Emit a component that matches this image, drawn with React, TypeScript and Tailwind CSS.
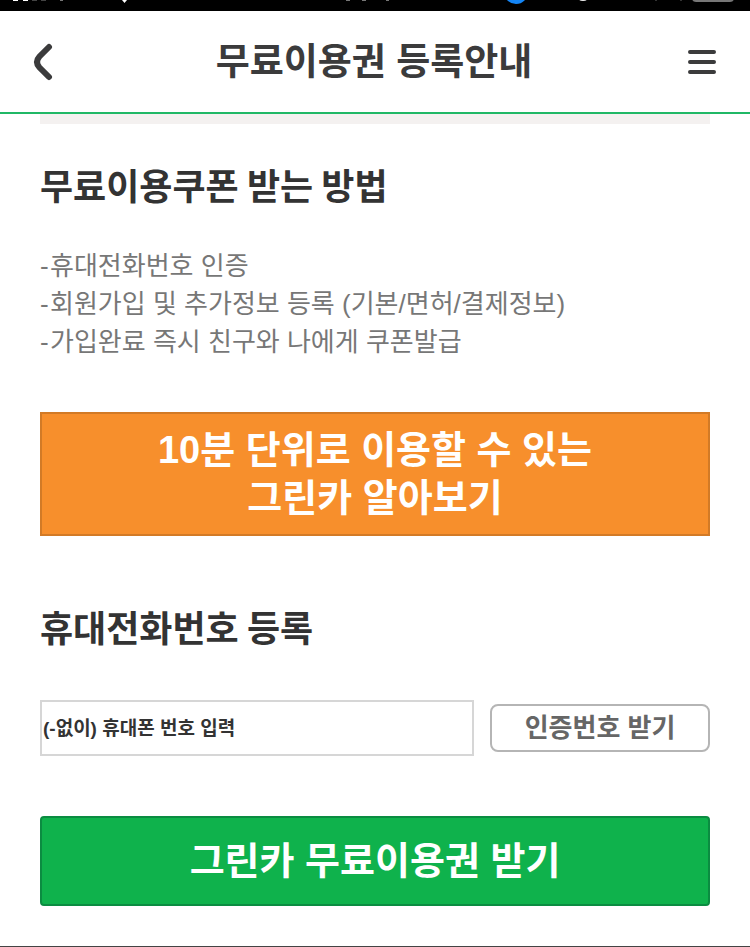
export default function App() {
  return (
    <div className="flex min-h-screen flex-col border-b border-[#444] bg-white font-['Liberation_Sans','Noto_Sans_CJK_KR',sans-serif] text-[#333]">
      <div className="h-[11px] overflow-hidden bg-black">
        <svg viewBox="0 0 750 11" className="block h-[11px] w-full" preserveAspectRatio="none" aria-hidden="true">
          <path d="M13 0h5M23 0h5" stroke="#fff" strokeWidth="2" />
          <path d="M32 0h5M41 0h5" stroke="#444" strokeWidth="2" />
          <path d="M60 0h3M346 0h4M362 0h4M386 0h3" stroke="#777" strokeWidth="2" />
          <path d="M655 0h2M680 0h2" stroke="#333" strokeWidth="2" />
          <path d="M122 0h5l-2.500 3z" fill="#fff" />
          <circle cx="516" cy="-8" r="12" fill="#1485f5" />
          <ellipse cx="583" cy="-1" rx="4" ry="2" fill="#eee" />
          <rect x="692" y="-10" width="42" height="12" rx="4" fill="#777" />
        </svg>
      </div>
      <header className="flex h-[103px] items-center justify-between border-b-2 border-[#20b866] px-8">
        <button aria-label="뒤로" className="h-10 w-7">
          <svg viewBox="0 0 28 40" className="h-10 w-7" fill="none" stroke="#3b3b3c" strokeWidth="6" strokeLinecap="round"><path d="M17 5 L7.500 14.500 Q2.500 20 7.500 25.500 L17 35" /></svg>
        </button>
        <h1 className="pt-[2px] text-[37px] font-bold leading-[54px] text-[#3b3b3c]">무료이용권 등록안내</h1>
        <button aria-label="메뉴" className="mr-[2px] h-10 w-7">
          <svg viewBox="0 0 28 40" className="h-10 w-7" fill="none" stroke="#3b3b3c" strokeWidth="4" strokeLinecap="round"><path d="M2 10H26M2 20H26M2 30H26" /></svg>
        </button>
      </header>
      <main className="px-10">
        <div className="h-[10px] bg-[#f4f1f0]" />
        <h2 className="mt-[35px] font-['Noto_Sans_CJK_KR',sans-serif] text-[36px] font-bold leading-[50px]">무료이용쿠폰 받는 방법</h2>
        <ul className="mt-[38px] text-[26px] leading-[38px] text-[#777]">
          <li className="flex"><span className="w-[10px]">-</span><span>휴대전화번호 인증</span></li>
          <li className="flex"><span className="w-[10px]">-</span><span>회원가입 및 추가정보 등록 (기본/면허/결제정보)</span></li>
          <li className="flex"><span className="w-[10px]">-</span><span>가입완료 즉시 친구와 나에게 쿠폰발급</span></li>
        </ul>
        <button className="mt-[51px] h-[124px] w-full border-2 border-[#d27a26] bg-[#f78f2c] text-[38px] font-bold leading-[48px] text-white">
          <span className="block">10분 단위로 이용할 수 있는</span>
          <span className="block">그린카 알아보기</span>
        </button>
        <h2 className="mt-[65px] font-['Noto_Sans_CJK_KR',sans-serif] text-[36px] font-bold leading-[50px]">휴대전화번호 등록</h2>
        <div className="mt-[49px] flex items-center gap-4">
          <input type="tel" aria-label="휴대폰 번호" placeholder="(-없이) 휴대폰 번호 입력" className="h-14 min-w-0 flex-1 border-2 border-[#d6d6d6] px-px pt-[2px] text-[19px] font-bold placeholder:text-[#333]" />
          <button className="h-12 w-[220px] rounded-lg border-2 border-[#b5b5b5] text-[26px] font-bold text-[#666]">인증번호 받기</button>
        </div>
        <button className="mt-[60px] h-[90px] w-full rounded border-2 border-[#0b8c41] bg-[#0fb24c] text-[38px] font-bold text-white">그린카 무료이용권 받기</button>
      </main>
    </div>
  );
}
